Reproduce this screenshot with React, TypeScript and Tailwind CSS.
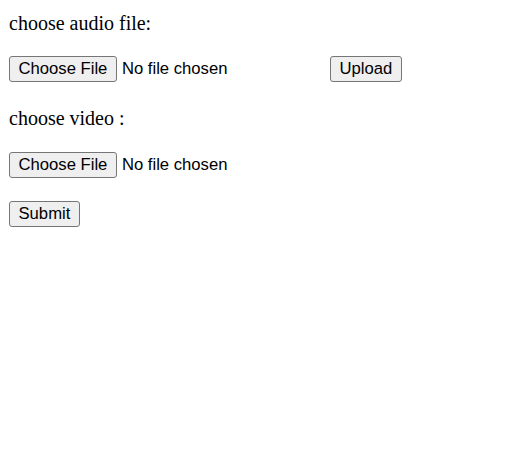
import React from 'react';

function Btn({ children }: { children: React.ReactNode }) {
  return (
    <button
      type="button"
      className="h-[26px] px-[8.5px] pb-[1px] border border-[#767676] rounded-[3px] bg-[#efefef] text-black text-[16.67px] leading-[19px] font-['Liberation_Sans',Arial,sans-serif]"
    >
      {children}
    </button>
  );
}

function FileField() {
  return (
    <div className="flex items-center w-[317px] shrink-0">
      <Btn>Choose File</Btn>
      <span className="ml-[5px] pb-[1px] text-[16.67px] leading-[19px] text-black font-['Liberation_Sans',Arial,sans-serif]">
        No file chosen
      </span>
    </div>
  );
}

export default function App() {
  return (
    <div className="min-h-[465px] bg-white pl-[9px] pt-[12px] font-['Liberation_Serif','Times_New_Roman',serif] text-black">
      <form onSubmit={(e) => e.preventDefault()} className="flex flex-col items-start">
        <div className="text-[20px] leading-[22px]">choose audio file:</div>

        <div className="flex items-center mt-[22px]">
          <FileField />
          <div className="ml-[4px]">
            <Btn>Upload</Btn>
          </div>
        </div>

        <div className="text-[20px] leading-[22px] mt-[25px]">choose video :</div>

        <div className="flex items-center mt-[23px]">
          <FileField />
        </div>

        <div className="mt-[23px]">
          <Btn>Submit</Btn>
        </div>
      </form>
    </div>
  );
}
